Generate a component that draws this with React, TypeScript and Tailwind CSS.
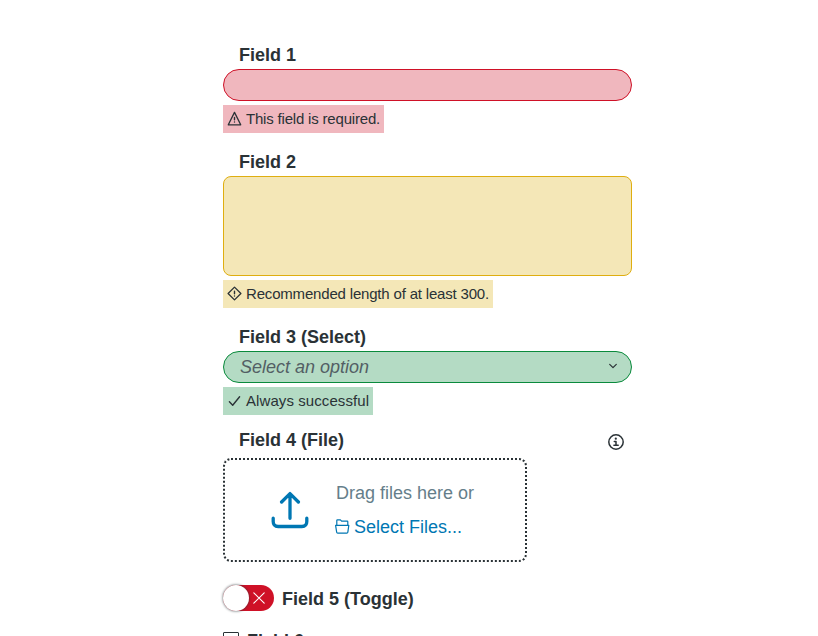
import type { ReactNode } from 'react';

const stroke = { fill: 'none', stroke: 'currentColor', strokeLinecap: 'round', strokeLinejoin: 'round' } as const;

function Label({ children }: { children: ReactNode }) {
  return <label className="block pl-4 text-[18px] leading-[27px] font-bold">{children}</label>;
}

function Message({ icon, color, children }: { icon: ReactNode; color: string; children: ReactNode }) {
  return (
    <div className={`mt-1 flex h-7 items-center gap-1 px-1 text-[15px] whitespace-nowrap ${color}`}>
      {icon}
      <span>{children}</span>
    </div>
  );
}

function WarningIcon() {
  return (
    <svg className="mb-0.5 size-[15px] shrink-0" viewBox="0 0 15 15" {...stroke} strokeWidth="1.3">
      <path d="M7.5 1.4 1.3 13.8h12.4Z" />
      <path d="M7.5 6.4v2.4M7.5 11v.1" strokeWidth="1.4" />
    </svg>
  );
}

function DiamondIcon() {
  return (
    <svg className="mb-0.5 size-[15px] shrink-0" viewBox="0 0 15 15" {...stroke} strokeWidth="1.3">
      <path d="m7.5 1.1 6.4 6.4-6.4 6.4-6.4-6.4Z" />
      <path d="M7.5 5.2v2.5M7.5 9.9v.1" strokeWidth="1.4" />
    </svg>
  );
}

function CheckIcon() {
  return (
    <svg className="mb-0.5 size-[15px] shrink-0" viewBox="0 0 15 15" {...stroke} strokeWidth="1.4">
      <path d="m2.4 8.8 3.3 3.4 6.9-8.4" />
    </svg>
  );
}

export default function App() {
  return (
    <main
      className="h-screen overflow-hidden bg-white pt-[42px] pl-[223px] text-[#2a3236]"
      style={{ fontFamily: '"Liberation Sans", Arial, sans-serif' }}
    >
      <form className="w-[409px]">
        <section>
          <Label>Field 1</Label>
          <input className="block h-8 w-full rounded-full border border-[#cf1127] bg-[#f0b7be] px-4 outline-none" />
          <Message icon={<WarningIcon />} color="w-[161px] tracking-[-0.19px] bg-[#f0b7be]">This field is required.</Message>
        </section>

        <section className="mt-4">
          <Label>Field 2</Label>
          <textarea className="block h-[100px] w-full resize-none rounded-lg border border-[#dfae10] bg-[#f4e7b7] outline-none" />
          <Message icon={<DiamondIcon />} color="w-[270px] tracking-[-0.18px] bg-[#f4e7b7]">Recommended length of at least 300.</Message>
        </section>

        <section className="mt-4">
          <Label>Field 3 (Select)</Label>
          <div className="flex h-8 items-center justify-between rounded-full border border-[#0a8a3c] bg-[#b4dbc4] pr-3.5 pl-4">
            <span className="text-[18px] text-[#535f64] italic">Select an option</span>
            <svg className="mb-0.5 size-2" viewBox="0 0 8 8" {...stroke} strokeWidth="1.2">
              <path d="m.7 2.3 3.3 3.3 3.3-3.3" />
            </svg>
          </div>
          <Message icon={<CheckIcon />} color="w-[150px] tracking-[0.08px] bg-[#b4dbc4]">Always successful</Message>
        </section>

        <section className="mt-3">
          <div className="flex justify-between pr-2">
            <Label>Field 4 (File)</Label>
            <svg className="mt-[7px] size-4" viewBox="0 0 16 16" {...stroke} strokeWidth="1.5">
              <circle cx="8" cy="8" r="7.2" />
              <path d="M6.3 7.4H8v3.7M5.9 11.3h4.3" />
              <circle cx="7.8" cy="4.7" r="1.1" fill="currentColor" stroke="none" />
            </svg>
          </div>
          <div className="mt-1 flex h-[104px] w-[304px] items-center rounded-lg border-2 border-dotted border-[#2a3236] pl-[46px]">
            <svg className="size-10 text-[#0077b3]" viewBox="0 0 40 40" {...stroke} strokeWidth="3.3">
              <path d="M19 28.3V3.6M10.6 12 19 3.6l8.4 8.4M2.2 28.2v3.4q0 4.9 4.9 4.9h23.8q4.9 0 4.9-4.9v-3.4" />
            </svg>
            <div className="pl-6 text-[18px] leading-[34px]">
              <div className="pl-px text-[#657e8a]">Drag files here or</div>
              <button type="button" className="flex items-center gap-1 text-[#0077b3]">
                <svg className="-mt-0.5 size-[15px]" viewBox="0 0 15 15" {...stroke} strokeWidth="1.2">
                  <path d="M.6 6.3h13.2l-1 7q-.1.9-1 .9H2.7q-.9 0-1-.9ZM1.8 6V1.4q0-.6.6-.6h3l1.2 1.3h5.6q.6 0 .6.6V6" />
                </svg>
                <span>Select Files...</span>
              </button>
            </div>
          </div>
        </section>

        <section className="mt-[23px] flex h-[26px] items-center gap-2">
          <div className="flex h-[26px] w-[51px] items-center justify-between rounded-full bg-[#cf1127] pr-2 text-white">
            <div className="size-[26px] rounded-full bg-white shadow-[0_0_2px_1px_rgba(42,50,54,0.4)]" />
            <svg className="size-3.5" viewBox="0 0 14 14" {...stroke} strokeWidth="1.1">
              <path d="m1.8 1.8 10.4 10.4m0-10.4L1.8 12.2" />
            </svg>
          </div>
          <span className="mt-0.5 text-[18px] leading-[27px] font-bold">Field 5 (Toggle)</span>
        </section>

        <section className="mt-4 flex items-start gap-2">
          <div className="mt-[5px] size-4 rounded-[1px] border border-[#2a3236]" />
          <span className="mt-px text-[18px] leading-[27px] font-bold">Field 6</span>
        </section>
      </form>
    </main>
  );
}
